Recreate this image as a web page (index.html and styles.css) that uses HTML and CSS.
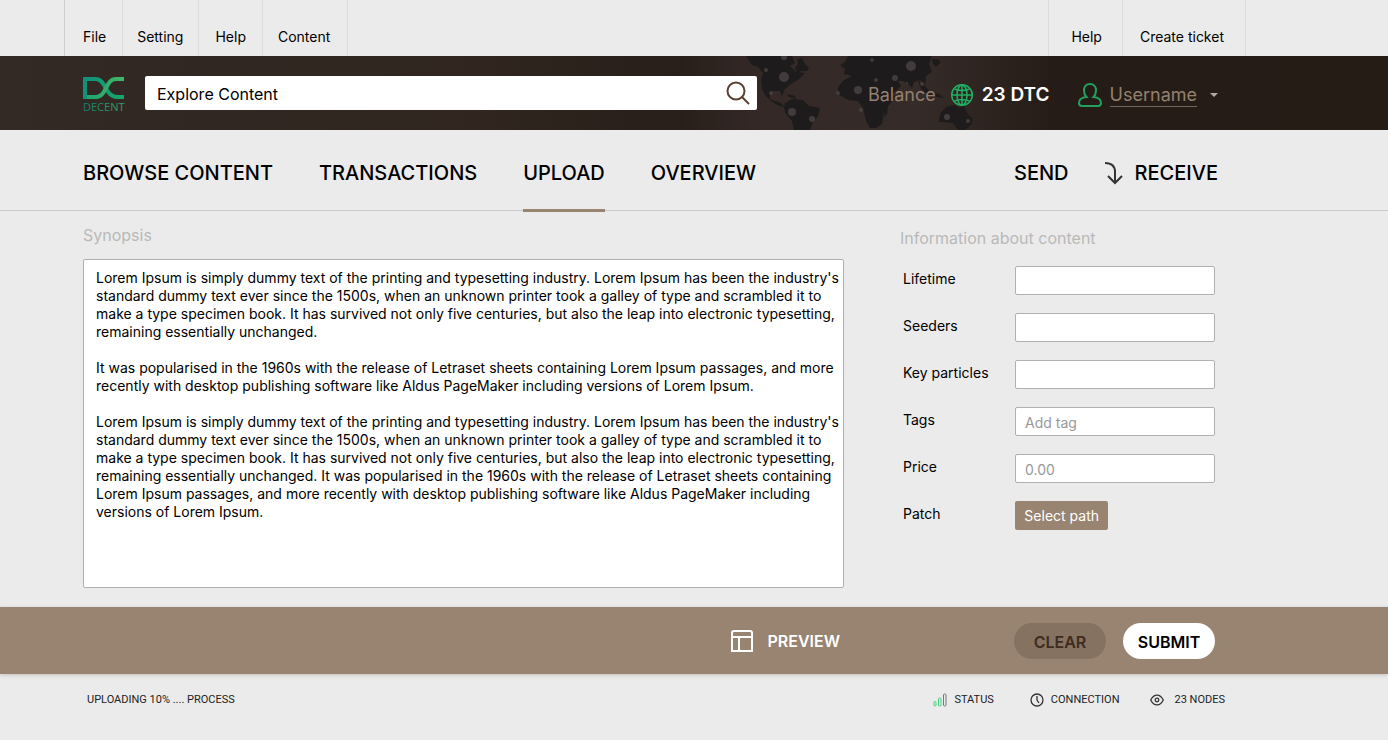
FILE: index.html
```html
<!DOCTYPE html>
<html lang="en">
<head>
<meta charset="utf-8">
<title>Decent</title>
<link rel="stylesheet" href="styles.css">
</head>
<body>
<nav class="menubar">
  <div class="menu">
    <button type="button">File</button>
    <button type="button">Setting</button>
    <button type="button">Help</button>
    <button type="button">Content</button>
  </div>
  <div class="menu menu-support">
    <button type="button">Help</button>
    <button type="button">Create ticket</button>
  </div>
</nav>

<header class="header">
  <svg class="map" viewBox="0 0 330 74" aria-hidden="true">
    <g class="land">
      <path d="M66 0h46l3 7-5 3 6 6 9 1-6 6-8 5-6 5-3 7-2-5-7 0-3 3 0 5 4 2 5 1 6 5-6-1-8-5-6-6-3-6-1-9 2-7-5-6-6-2z"/>
      <path d="M117 3l5-1 3 6 4 4-2 3-6 0-4 3-2-6 3-4zM107 38l8 2 1 3-7-2z"/>
      <path d="M105 47l7-4 11 1 6 6 11 2-2 8-5 6-3 8h-16l-2-9-6-7-2-6z"/>
      <path d="M160 9l5-3 3-6h84l-3 8 3 8-6 4-1 9-5-5-6 2-2 6-4-4-5-3-5 0 3 5-6 6-4 3 4 2-6 8-5 7-2 12-6 4-6 0-4-7-3-13-5-7-10-1-10-6 0-7 6-7 8-4-8-2 1-5z"/>
      <path d="M205 53l3-3-1 8-3 3zM238 24l6 5 8 9-3 1-8-6zM249 37l10 1 5 4-7-1zM260 58l6-7 9-2 4 3 5-2 3 7 6 6-2 6-6 5h-7l-5-7-9-1-5 0zM252 3l6 0 3 3-5 5-3-3z"/>
    </g>
    <g class="dots">
      <circle cx="104" cy="21" r="5"/><circle cx="86" cy="14" r="2"/><circle cx="104" cy="1" r="3"/>
      <circle cx="91" cy="37" r="2"/><circle cx="112" cy="56" r="4"/><circle cx="132" cy="63" r="3"/>
      <circle cx="178" cy="34" r="4"/><circle cx="158" cy="37" r="2"/><circle cx="181" cy="54" r="2"/>
      <circle cx="231" cy="10" r="5"/><circle cx="215" cy="22" r="3"/><circle cx="192" cy="4" r="2"/>
      <circle cx="196" cy="24" r="2"/><circle cx="242" cy="28" r="2"/><circle cx="227" cy="27" r="1"/>
      <circle cx="267" cy="61" r="3"/><circle cx="288" cy="65" r="2"/>
    </g>
  </svg>
  <svg class="logo" viewBox="0 0 42 36" role="img" aria-label="Decent">
    <defs>
      <linearGradient id="teal"><stop offset="0" stop-color="#12907c"/><stop offset="1" stop-color="#17a868"/></linearGradient>
      <linearGradient id="leaf"><stop offset="0" stop-color="#1da571"/><stop offset="1" stop-color="#43b566"/></linearGradient>
      <linearGradient id="name"><stop offset="0" stop-color="#127f70"/><stop offset="1" stop-color="#36a062"/></linearGradient>
    </defs>
    <path d="M2 23V3h11c10 0 9 18 21 18h7" fill="none" stroke="url(#teal)" stroke-width="4"/>
    <path d="M41 3h-8C22 3 24 21 13 21H4" fill="none" stroke="url(#leaf)" stroke-width="4"/>
    <text x="0" y="35" class="logo-name" fill="url(#name)">DECENT</text>
  </svg>
  <form class="search">
    <input type="text" value="Explore Content" aria-label="Explore content">
    <button type="button" aria-label="Search">
      <svg viewBox="0 0 24 24" width="24" height="24"><circle cx="10" cy="10" r="8.500"/><path d="M16 16l7 7"/></svg>
    </button>
  </form>
  <div class="account">
    <span class="balance-label">Balance</span>
    <svg class="globe" viewBox="0 0 24 24" width="24" height="24"><circle cx="12" cy="12" r="10.300"/><ellipse cx="12" cy="12" rx="5" ry="10"/><path d="M12 2v20M2 12h20M4.500 6Q12 9 19.500 6M4.500 18Q12 15 19.500 18"/></svg>
    <span class="balance">23 DTC</span>
    <svg class="person" viewBox="0 0 26 26" width="26" height="26"><path d="M13 2c-4 0-6 3-6 6.500 0 3 1 5 2.500 6.500C4 15.500 2 18 2 21c0 2 1 3 3 3h16c2 0 3-1 3-3 0-3-2-5.500-7.500-6 1.500-1.500 2.500-3.500 2.500-6.500C19 5 17 2 13 2z"/></svg>
    <a class="user" href="#">Username</a>
    <svg class="caret" viewBox="0 0 8 5" width="8" height="5"><path d="M0 0h8L4 4z"/></svg>
  </div>
</header>

<nav class="tabs">
  <a href="#">BROWSE CONTENT</a>
  <a href="#">TRANSACTIONS</a>
  <a href="#" class="active">UPLOAD</a>
  <a href="#">OVERVIEW</a>
  <div class="transfer">
    <a href="#">SEND</a>
    <a href="#" class="receive"><svg viewBox="0 0 20 24" width="20" height="24"><path d="M1 2c6 0 10 2 10 9v11M4 15l7 7 7-7"/></svg>RECEIVE</a>
  </div>
</nav>

<main class="main">
  <section class="synopsis">
    <label for="synopsis">Synopsis</label>
    <textarea id="synopsis" spellcheck="false">Lorem Ipsum is simply dummy text of the printing and typesetting industry. Lorem Ipsum has been the industry's standard dummy text ever since the 1500s, when an unknown printer took a galley of type and scrambled it to make a type specimen book. It has survived not only five centuries, but also the leap into electronic typesetting, remaining essentially unchanged.

It was popularised in the 1960s with the release of Letraset sheets containing Lorem Ipsum passages, and more recently with desktop publishing software like Aldus PageMaker including versions of Lorem Ipsum.

Lorem Ipsum is simply dummy text of the printing and typesetting industry. Lorem Ipsum has been the industry's standard dummy text ever since the 1500s, when an unknown printer took a galley of type and scrambled it to make a type specimen book. It has survived not only five centuries, but also the leap into electronic typesetting, remaining essentially unchanged. It was popularised in the 1960s with the release of Letraset sheets containing Lorem Ipsum passages, and more recently with desktop publishing software like Aldus PageMaker including versions of Lorem Ipsum.</textarea>
  </section>
  <section class="info">
    <h2>Information about content</h2>
    <div class="row"><label for="lifetime">Lifetime</label><input id="lifetime" type="text"></div>
    <div class="row"><label for="seeders">Seeders</label><input id="seeders" type="text"></div>
    <div class="row"><label for="particles">Key particles</label><input id="particles" type="text"></div>
    <div class="row"><label for="tags">Tags</label><input id="tags" type="text" placeholder="Add tag"></div>
    <div class="row"><label for="price">Price</label><input id="price" type="text" placeholder="0.00"></div>
    <div class="row"><label for="path">Patch</label><button id="path" type="button">Select path</button></div>
  </section>
</main>

<div class="actions">
  <button type="button" class="preview"><svg viewBox="0 0 22 22" width="22" height="22"><path d="M1 21V3c0-1 1-2 2-2h16c1 0 2 1 2 2v18zM1 7h20M8 7v14"/></svg>PREVIEW</button>
  <button type="button" class="pill clear">CLEAR</button>
  <button type="button" class="pill submit">SUBMIT</button>
</div>

<footer class="footer">
  <span class="progress">UPLOADING 10% .... PROCESS</span>
  <span class="stat status"><svg viewBox="0 0 14 14" width="14" height="14"><rect class="on" x="1" y="8.500" width="2" height="4.500" rx="1"/><rect class="on" x="5.500" y="5" width="2.500" height="8" rx="1"/><rect class="off" x="10.500" y="1" width="2.500" height="12" rx="1"/></svg>STATUS</span>
  <span class="stat connection"><svg viewBox="0 0 14 14" width="14" height="14"><circle cx="7" cy="7" r="6"/><path d="M7 3v4l2 3"/></svg>CONNECTION</span>
  <span class="stat nodes"><svg viewBox="0 0 14 14" width="14" height="14"><path d="M.7 7C4 .5 10 .5 13.300 7 10 13.500 4 13.500.7 7z"/><circle cx="7" cy="7" r="1.800"/></svg>23 NODES</span>
</footer>
</body>
</html>
```

FILE: styles.css
```css
* { box-sizing: border-box; }
body {
  margin: 0;
  min-height: 100vh;
  display: flex;
  flex-direction: column;
  background: #ebebeb;
  color: #000;
  font: 14px/18px Inter, "Liberation Sans", sans-serif;
}
button, input, textarea { font: inherit; color: inherit; }
button { border: 0; background: none; padding: 0; cursor: pointer; }
a { color: inherit; text-decoration: none; }
svg { display: block; flex: none; fill: none; }

.menubar {
  display: flex;
  justify-content: space-between;
  height: 56px;
  padding: 0 142px 0 64px;
}
.menu { display: flex; }
.menu button {
  padding: 18px 16px 0;
  border-left: 1px solid #dcdcdc;
}
.menu button:first-child { padding-left: 18px; border-left-color: #cfcfcf; }
.menu button:nth-child(2) { padding-left: 14px; padding-right: 15px; }
.menu button:last-child { border-right: 1px solid #dcdcdc; padding-left: 15px; padding-right: 17px; }
.menu-support button:first-child { padding: 18px 20px 0 22px; border-left-color: #dcdcdc; }
.menu-support button:last-child { padding: 18px 21px 0 17px; }

.header {
  position: relative;
  display: flex;
  height: 74px;
  padding: 20px 170px 0 83px;
  background: linear-gradient(90deg, #332925 0%, #30261f 34%, #291f1a 49%, #342926 55%, #352b28 66%, #261c17 76%, #261c16 100%);
}
.map { position: absolute; left: 680px; top: 0; width: 330px; height: 74px; }
.land { fill: #1d1b1c; }
.dots { fill: #4b4543; fill-opacity: 0.8; }
.logo { position: relative; width: 42px; height: 36px; margin-right: 20px; overflow: visible; }
.logo-name { font: 11px "Open Sans", sans-serif; }
.search {
  position: relative;
  display: flex;
  flex: 0 1 612px;
  height: 34px;
  padding-right: 7px;
  background: #fff;
  border-radius: 2px;
}
.search input {
  flex: 1;
  min-width: 0;
  padding: 2px 12px 0;
  border: 0;
  background: none;
  font-size: 16px;
}
.search svg { stroke: #5b4032; stroke-width: 2; }
.account {
  position: relative;
  display: flex;
  align-items: center;
  height: 38px;
  margin-left: auto;
  font-size: 18px;
  line-height: 22px;
}
.balance-label { color: #94806f; margin-right: 14px; }
.globe { stroke: #21b066; stroke-width: 1.5; margin-right: 8px; }
.balance { color: #fff; font-size: 19px; font-weight: 600; margin-right: 27px; }
.person { stroke: #21a060; stroke-width: 2; margin-right: 7px; }
.user { color: #94806f; border-bottom: 1px solid #75655a; margin-right: 13px; }
.caret { fill: #b5a99f; }

.tabs {
  display: flex;
  height: 81px;
  gap: 46px;
  padding: 0 170px 0 83px;
  border-bottom: 1px solid #cacaca;
  font-size: 20px;
  font-weight: 500;
  line-height: 24px;
}
.tabs a { padding-top: 31px; }
.tabs .active { height: 82px; border-bottom: 3px solid #998471; }
.transfer { display: flex; gap: 35px; margin-left: auto; }
.receive { display: flex; gap: 11px; }
.receive svg { stroke: #333; stroke-width: 2; }

.main {
  display: flex;
  flex: 1;
  gap: 56px;
  padding: 0 173px 19px 83px;
}
.synopsis { display: flex; flex-direction: column; flex: 1; min-width: 0; }
.synopsis label, .info h2 {
  margin: 0;
  color: #b9b9b9;
  font-size: 16px;
  font-weight: 400;
  line-height: 20px;
}
.synopsis label { padding: 14px 0; }
.synopsis textarea {
  flex: 1;
  min-height: 329px;
  padding: 9px 0 9px 12px;
  border: 1px solid #b0b0b0;
  border-radius: 2px;
  background: #fff;
  resize: none;
}
.info { width: 315px; padding-top: 17px; }
.info h2 { margin-bottom: 18px; }
.row { display: flex; justify-content: space-between; height: 29px; margin-bottom: 18px; }
.row label { flex: 1; padding: 4px 0 0 3px; }
.row input {
  width: 200px;
  padding: 2px 9px 0;
  border: 1px solid #b0b0b0;
  border-radius: 2px;
  background: #fff;
}
.row input::placeholder { color: #999; }
.row button { margin-right: 107px; padding: 1px 9px 0; border-radius: 2px; background: #998471; color: #fff; }

.actions {
  display: flex;
  align-items: center;
  justify-content: flex-end;
  height: 67px;
  padding-right: 173px;
  background: #998471;
  box-shadow: 0 1px 4px #c4c0bd;
  font-size: 16px;
  font-weight: 600;
}
.preview { display: flex; align-items: center; gap: 14px; margin-right: 174px; color: #fff; }
.preview svg { stroke: #fff; stroke-width: 2; }
.pill { width: 92px; height: 36px; padding-top: 2px; border-radius: 18px; }
.clear { margin-right: 17px; background: #857261; color: #3f2c20; }
.submit { background: #fff; }

.footer {
  display: flex;
  height: 66px;
  padding: 16px 163px 0 87px;
  color: #222;
  font-family: Roboto, sans-serif;
  font-size: 11px;
  line-height: 20px;
}
.progress { margin-right: auto; }
.stat { display: flex; height: 20px; align-items: center; gap: 7px; }
.stat svg { stroke: #333; stroke-width: 1.3; }
.status { margin-right: 36px; }
.connection { margin-right: 31px; }
.nodes { gap: 10px; }
.stat .on { stroke: #45cf83; stroke-width: 1; }
.stat .off { stroke: #777; stroke-width: 1; }
```
